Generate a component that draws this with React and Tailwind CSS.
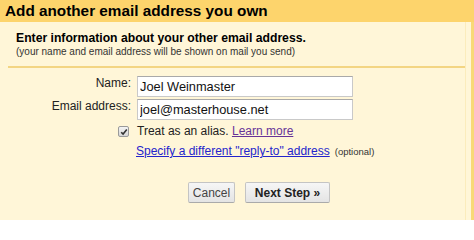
import React from 'react';

const Label = ({ children }) => (
  <div className="text-right text-[12px] leading-[14px] text-[#222]">{children}</div>
);

const Field = ({ value }) => (
  <input
    type="text"
    defaultValue={value}
    className="w-[216px] h-[21px] px-[2px] bg-white border border-[#c9c9c9] border-t-[#a9a9a9] text-[12.8px] text-[#111] outline-none"
    style={{ fontFamily: '"Liberation Sans", Arial, sans-serif' }}
  />
);

const Checkbox = () => (
  <span className="flex items-center justify-center w-[11px] h-[11px] rounded-[2px] border border-[#9a9a9a] bg-gradient-to-b from-[#f4f4f4] to-[#d6d6d6]">
    <svg width="8" height="8" viewBox="0 0 8 8">
      <path d="M1.2 4.2 L3.1 6.1 L6.8 1.6" fill="none" stroke="#333" strokeWidth="1.6" />
    </svg>
  </span>
);

export default function App() {
  return (
    <div className="w-[474px] h-[220px] overflow-hidden bg-[#fff6d8] font-['Liberation_Sans',Arial,sans-serif] text-[#111]">
      {/* title bar */}
      <div className="h-[22px] bg-[#fdd46c] pl-[5px] text-[15.3px] font-bold leading-[22px] text-black">
        Add another email address you own
      </div>

      <div className="flex h-[198px] border-r-[3px] border-[#f8d978]">
        <div className="flex-1 mr-[5px] border-r border-[#fbecbc]">
          <div className="pt-[9px] pl-[16px]">
            <div className="text-[12.2px] font-bold leading-[14px] text-black">
              Enter information about your other email address.
            </div>
            <div className="mt-[1px] text-[10px] leading-[12px] text-[#333]">
              (your name and email address will be shown on mail you send)
            </div>
          </div>

          <div className="mt-[8px] ml-[8px] h-[2px] bg-[#f3d583]" />

          <div className="mt-[8px] grid grid-cols-[131px_1fr] gap-x-[6px] gap-y-[2px]">
            <Label>Name:</Label>
            <Field value="Joel Weinmaster" />
            <Label>Email address:</Label>
            <Field value="joel@masterhouse.net" />
          </div>

          <div className="mt-[4px] grid grid-cols-[131px_1fr] gap-x-[6px]">
            <div className="flex justify-end items-center pr-[2px] pt-[1px]">
              <Checkbox />
            </div>
            <div className="text-[12px] leading-[14px] text-[#222]">
              Treat as an alias.{' '}
              <a href="#" className="text-[#663399] underline">Learn more</a>
            </div>
          </div>

          <div className="mt-[5px] pl-[136px] leading-[14px]">
            <a href="#" className="text-[12px] text-[#2424cc] underline">
              Specify a different "reply-to" address
            </a>
            <span className="ml-[5px] text-[9.5px] text-[#333]">(optional)</span>
          </div>

          <div className="mt-[23px] flex gap-[10px] pl-[188px]">
            <button className="h-[21px] w-[47px] rounded-[2px] border border-[#c4c4c4] border-b-[#aaa] bg-gradient-to-b from-[#f6f6f6] to-[#e4e4e4] text-[12px] text-[#444]">
              Cancel
            </button>
            <button className="h-[21px] w-[85px] rounded-[2px] border border-[#c4c4c4] border-b-[#aaa] bg-gradient-to-b from-[#f6f6f6] to-[#e4e4e4] text-[12px] font-bold text-[#222]">
              Next Step »
            </button>
          </div>
        </div>
      </div>
    </div>
  );
}
